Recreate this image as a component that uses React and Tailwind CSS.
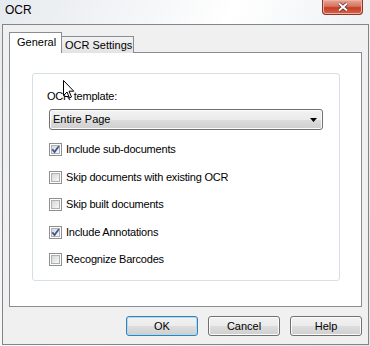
const font = { fontFamily: '"Liberation Sans", Arial, sans-serif' };

function CheckBox({ checked }) {
  return (
    <div className="w-[13px] h-[13px] border border-[#8e8f8f] bg-white p-px shrink-0">
      <div className="w-full h-full border border-[#aeb0b2] bg-gradient-to-br from-[#d6d7d8] to-[#f8f8f8] relative">
        {checked && (
          <svg viewBox="0 0 9 9" className="absolute -left-px -top-px w-[9px] h-[9px]">
            <path d="M1.3 4.3 L3.5 7 L7.8 1.2" fill="none" stroke="#3d5694" strokeWidth="1.8" />
          </svg>
        )}
      </div>
    </div>
  );
}

function Option({ label, checked }) {
  return (
    <div className="flex items-center h-[13px] gap-[4px]">
      <CheckBox checked={checked} />
      <span className="text-[11px] leading-[13px] tracking-[-0.2px] text-black">{label}</span>
    </div>
  );
}

function DlgButton({ children, focused }) {
  return (
    <div
      className={`w-[72px] h-[20px] rounded-[3px] border flex items-center justify-center text-[11px] text-black bg-[linear-gradient(#f2f2f2_0%,#ebebeb_50%,#dddddd_51%,#cfcfcf_100%)] ${
        focused ? "border-[#3c7fb1] shadow-[inset_0_0_0_1px_#a7dcf5]" : "border-[#707070] shadow-[inset_0_0_0_1px_#fcfcfc]"
      }`}
    >
      {children}
    </div>
  );
}

export default function App() {
  return (
    <div
      className="relative w-[370px] h-[346px] flex flex-col overflow-hidden bg-[linear-gradient(115deg,#e6eaee_0%,#f6f7f9_30%,#ffffff_45%,#eef1f4_70%,#e2e6ea_100%)]"
      style={font}
    >
      {/* title bar */}
      <div className="h-[24px] flex items-start justify-between shrink-0">
        <span className="pl-[5px] pt-[3px] text-[12px] leading-[14px] text-black">OCR</span>
        <div className="mr-[7px] w-[41px] h-[15px] rounded-b-[4px] border border-t-0 border-[#8a3626] bg-[linear-gradient(#e9a597_0%,#d8735f_45%,#c43d25_55%,#d5654b_100%)] flex items-center justify-center shadow-[inset_0_0_0_1px_#eeb2a4]">
          <svg viewBox="0 0 12 10" className="w-[12px] h-[10px]">
            <path d="M2 1.5 L10 8.5 M10 1.5 L2 8.5" stroke="#5a2a22" strokeWidth="3.4" />
            <path d="M2 1.5 L10 8.5 M10 1.5 L2 8.5" stroke="#ffffff" strokeWidth="2" />
          </svg>
        </div>
      </div>

      {/* client area */}
      <div className="ml-[2px] mr-[1px] h-[321px] border border-[#858585] bg-[#f0f0f0] flex flex-col px-[6px] pt-[7px]">
        {/* tabs */}
        <div className="flex items-end h-[21px] relative z-10 -mb-px">
          <div className="w-[53px] h-[21px] border border-b-0 border-[#898c95] bg-white text-[11px] leading-[13px] text-black pl-[7px] pt-[3px]">
            General
          </div>
          <div className="w-[72px] h-[17px] border border-l-0 border-b-0 border-[#898c95] bg-[linear-gradient(#f3f3f3,#e3e3e3)] text-[11px] leading-[13px] text-black pl-[3px] pt-[2px]">
            OCR Settings
          </div>
        </div>

        {/* panel */}
        <div className="w-[353px] h-[255px] border border-[#898c95] bg-white pl-[22px] pt-[20px]">
          <div className="w-[308px] h-[208px] border border-[#d5dfe5] rounded-[3px] pl-[14px] pt-[16px] flex flex-col">
            <span className="text-[11px] leading-[13px] tracking-[-0.2px] text-black">OCR template:</span>
            <div className="ml-[2px] mt-[6px] w-[274px] h-[21px] rounded-[3px] border border-[#707070] shadow-[inset_0_0_0_1px_#fcfcfc] bg-[linear-gradient(#f2f2f2_0%,#ebebeb_50%,#dddddd_51%,#cfcfcf_100%)] flex items-center justify-between pl-[3px] pr-[5px]">
              <span className="text-[11px] leading-[13px] text-black">Entire Page</span>
              <svg viewBox="0 0 7 4" className="w-[7px] h-[4px]">
                <path d="M0 0 H7 L3.5 4 Z" fill="#000" />
              </svg>
            </div>
            <div className="ml-[2px] mt-[13px] flex flex-col gap-[14.5px]">
              <Option label="Include sub-documents" checked />
              <Option label="Skip documents with existing OCR" />
              <Option label="Skip built documents" />
              <Option label="Include Annotations" checked />
              <Option label="Recognize Barcodes" />
            </div>
          </div>
        </div>

        {/* buttons */}
        <div className="mt-[9px] w-[353px] flex justify-end gap-[10px]">
          <DlgButton focused>OK</DlgButton>
          <DlgButton>Cancel</DlgButton>
          <DlgButton>Help</DlgButton>
        </div>
      </div>

      {/* mouse pointer */}
      <svg viewBox="0 0 12 19" className="absolute left-[63px] top-[80px] w-[12px] h-[19px]">
        <path d="M0.5 0.5 V15.5 L4 12 L6.5 18 L8.5 17 L6 11.2 H10.8 Z" fill="#fff" stroke="#000" strokeWidth="1" />
      </svg>
    </div>
  );
}
